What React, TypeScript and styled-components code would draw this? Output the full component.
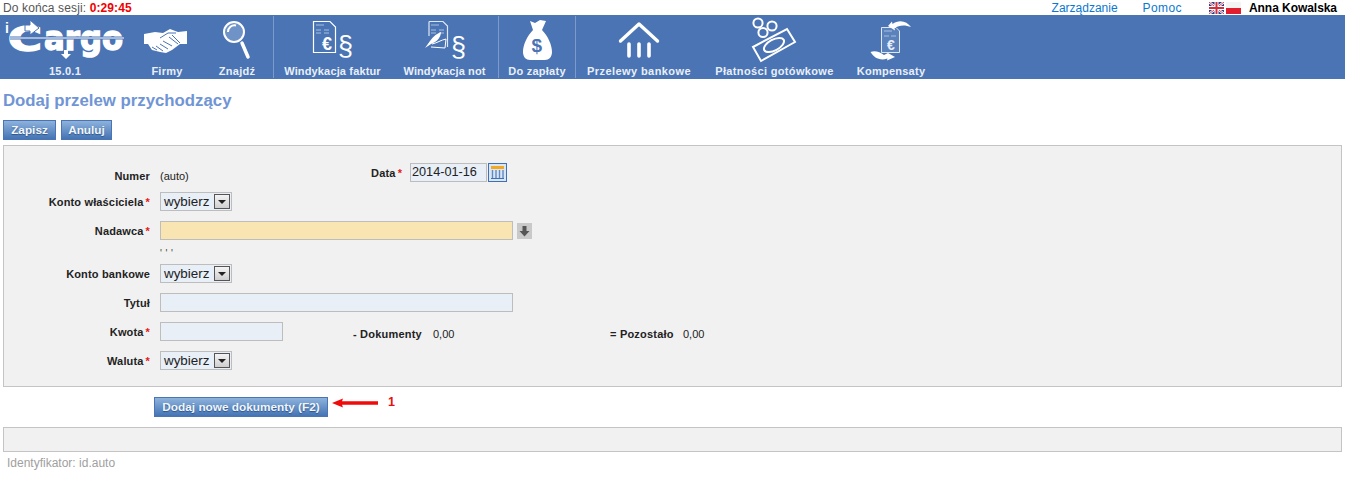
import React from 'react'
import styled, { createGlobalStyle } from 'styled-components'

const NAV_BLUE = '#4a74b4'

const GlobalStyle = createGlobalStyle`
  html, body {
    margin: 0;
    background: #fff;
    font-family: 'Liberation Sans', Arial, sans-serif;
  }
`
const TopBar = styled.div`
  display: flex;
  align-items: center;
  justify-content: space-between;
  height: 15px;
  padding: 0 8px 0 3px;
  font-size: 12px;
  color: #555;
`
const SessionTime = styled.b`
  color: #f00000;
  letter-spacing: 0.1px;
`
const SessionText = styled.span`
  letter-spacing: 0.12px;
`
const TopRight = styled.div`
  display: flex;
  align-items: center;
`
const TopLink = styled.a<{ $gap: number; $spacing?: number }>`
  color: #0b78cf;
  margin-right: ${p => p.$gap}px;
  letter-spacing: ${p => p.$spacing || 0}px;
`
const UserName = styled.b`
  color: #000;
  margin-left: 8px;
  letter-spacing: -0.05px;
`
const Nav = styled.nav`
  display: flex;
  height: 64px;
  background: ${NAV_BLUE};
`
const NavItem = styled.div<{ $width: number }>`
  display: flex;
  flex-direction: column;
  align-items: center;
  width: ${p => p.$width}px;
`
const NavSvg = styled.svg`
  display: block;
  flex: none;
`
const NavLabel = styled.span<{ $spacing?: number }>`
  font-size: 11px;
  font-weight: 700;
  line-height: 13px;
  letter-spacing: ${p => p.$spacing ?? 0.25}px;
  white-space: nowrap;
  color: #e9eff8;
`
const NavSep = styled.div<{ $before?: number }>`
  width: 1px;
  height: 62px;
  margin: 1px 0 0 ${p => p.$before || 0}px;
  background: #7c9bca;
`
const Title = styled.h1`
  margin: 13px 0 0 3px;
  font-size: 16.8px;
  line-height: 18px;
  font-weight: 700;
  color: #7095d5;
`
const Toolbar = styled.div`
  display: flex;
  gap: 5px;
  margin: 10px 0 5px 3px;
`
const BlueButton = styled.button<{ $width: number }>`
  width: ${p => p.$width}px;
  height: 20px;
  padding: 0;
  border: 1px solid #4a74b4;
  background: linear-gradient(#8db2dc, #4474b4);
  color: #f2f6fb;
  font-family: inherit;
  font-size: 11.8px;
  font-weight: 700;
  text-shadow: 0 1px 1px #2e5488;
`
const Panel = styled.div`
  margin: 0 3px 0 3px;
  border: 1px solid #c4c4c4;
  background: #f1f1f1;
`
const FormPanel = styled(Panel)`
  display: flex;
  flex-direction: column;
  gap: 10px;
  padding: 17px 0 16px;
`
const Row = styled.div`
  display: flex;
  align-items: center;
  height: 19px;
`
const HintRow = styled.div`
  height: 4px;
  margin-left: 156px;
  font-size: 10px;
  line-height: 8px;
  letter-spacing: 3.6px;
  color: #3d4a2a;
`
const Label = styled.label<{ $drop?: number }>`
  width: 146px;
  margin-right: 10px;
  flex: none;
  text-align: right;
  font-size: 11px;
  font-weight: 700;
  letter-spacing: 0.15px;
  color: #222;
  padding-top: ${p => p.$drop || 0}px;
`
const Star = styled.span`
  color: #e81818;
  margin-left: 2px;
`
const Plain = styled.span<{ $width: number }>`
  flex: none;
  width: ${p => p.$width}px;
  font-size: 11px;
  color: #222;
  padding-top: 6px;
`
const InlineLabel = styled.label<{ $width: number }>`
  flex: none;
  width: ${p => p.$width}px;
  font-size: 11px;
  font-weight: 700;
  letter-spacing: 0.2px;
  color: #222;
`
const TextBox = styled.div<{ $width: number; $tone?: 'warn' }>`
  box-sizing: border-box;
  flex: none;
  width: ${p => p.$width}px;
  height: 19px;
  padding-left: 1px;
  border: 1px solid #bdbdbd;
  background: ${p => (p.$tone === 'warn' ? '#f9e5b2' : '#e8eff7')};
  font-size: 12.7px;
  line-height: 17px;
  color: #222;
`
const SelectBox = styled.div`
  box-sizing: border-box;
  display: flex;
  align-items: center;
  justify-content: space-between;
  width: 72px;
  height: 19px;
  padding: 0 1px 0 3px;
  border: 1px solid #bdbdbd;
  background: #e8eff7;
  font-size: 13.4px;
  color: #222;
`
const SelectArrow = styled.span`
  box-sizing: border-box;
  display: flex;
  align-items: center;
  justify-content: center;
  width: 16px;
  height: 15px;
  border: 1px solid #555;
  background: linear-gradient(#f4f4f4, #cfcfcf);
  &::after {
    content: '';
    border: 4px solid transparent;
    border-top-color: #222;
    border-bottom: 0;
  }
`
const Summary = styled.div`
  display: flex;
  align-items: center;
  padding-top: 5px;
`
const SummaryValue = styled.span<{ $width?: number }>`
  flex: none;
  width: ${p => (p.$width ? `${p.$width}px` : 'auto')};
  font-size: 11px;
  color: #222;
`
const IconSlot = styled.span<{ $left: number; $lift?: number }>`
  display: flex;
  margin-left: ${p => p.$left}px;
  margin-bottom: ${p => p.$lift || 0}px;
`
const ActionRow = styled.div`
  display: flex;
  align-items: center;
  height: 20px;
  margin: 10px 0 10px 154px;
`
const Callout = styled.b`
  margin: 0 0 11px 10px;
  font-size: 12.5px;
  color: #ea0f0f;
`
const StatusPanel = styled(Panel)`
  height: 23px;
`
const Footer = styled.div`
  margin: 4px 0 0 7px;
  font-size: 12px;
  color: #a0a0a0;
`

const Logo = () => (
  <NavSvg width={130} height={50} viewBox="0 15 130 50">
    <text x={5} y={33} fill="#fff" fontFamily="'Liberation Sans'" fontWeight={700} fontSize={14}>
      i
    </text>
    <g fill="#fff" stroke="#fff" strokeWidth={1.4} fontFamily="'DejaVu Sans'" fontWeight={700}>
      <text x={8} y={51} fontSize={33} textLength={34} lengthAdjust="spacingAndGlyphs">
        C
      </text>
      <text x={44} y={50} fontSize={33} textLength={79} lengthAdjust="spacingAndGlyphs">
        argo
      </text>
    </g>
    <path d="M25 25 H30 V20 L39 28 L30 35 V31 H25 Z" fill="#fff" stroke={NAV_BLUE} strokeWidth={1} />
    <path d="M10 38 H124" stroke={NAV_BLUE} strokeWidth={3} />
    <path d="M10 38 H124" stroke="#fff" strokeWidth={1} />
    <path d="M64 50 V54 H61 L66 59 L71 54 H68 V50 Z" fill="#fff" />
  </NavSvg>
)

const Handshake = () => (
  <NavSvg width={74} height={50} viewBox="130 15 74 50">
    <path d="M144 34 L155 32 L163 33 L170 29 L178 32 L187 31 L187 44 L180 44 L172 50 L166 53 L160 52 L152 50 L148 44 L144 44 Z" fill="#fff" />
    <path
      d="M160 38 L168 33 L176 33 M163 41 L172 46 M160 44 L168 49 M156 46 L163 51 M152 47 L157 50 M169 37 L178 44 M172 35 L180 43"
      stroke={NAV_BLUE}
      strokeWidth={1}
      fill="none"
    />
  </NavSvg>
)

const Magnifier = () => (
  <NavSvg width={66} height={50} viewBox="204 15 66 50">
    <circle cx={234} cy={32} r={10} fill="#6f92c7" stroke="#fff" strokeWidth={2} />
    <path d="M228 32 A6.5 6.5 0 0 1 236 25.5" stroke="#fff" strokeWidth={2} fill="none" />
    <path d="M242 43 L248 57" stroke="#fff" strokeWidth={3.5} strokeLinecap="round" />
  </NavSvg>
)

const DocLines = ({ x, y }: { x: number; y: number }) => (
  <path
    d={`M${x} ${y} h8 M${x} ${y + 5} h5 M${x + 8} ${y + 5} h5 M${x} ${y + 8} h5 M${x + 8} ${y + 8} h5`}
    stroke="#a9bfdf"
    strokeWidth={1}
  />
)

const InvoiceDoc = () => (
  <NavSvg width={117} height={50} viewBox="274 15 117 50">
    <path d="M313.5 21.5 H330 L335.5 27 V52.5 H313.5 Z" fill="none" stroke="#fff" strokeWidth={1.2} />
    <DocLines x={316} y={25} />
    <text x={322} y={50} fill="#fff" fontFamily="'Liberation Sans'" fontWeight={700} fontSize={18}>
      €
    </text>
    <text x={338} y={55} fill="#fff" fontFamily="'Liberation Sans'" fontSize={27}>
      §
    </text>
  </NavSvg>
)

const NoteDoc = () => (
  <NavSvg width={107} height={50} viewBox="391 15 107 50">
    <path d="M429 21.5 H443 L447.5 26 V47 M429 21.5 V36" fill="none" stroke="#dfe7f3" strokeWidth={1.2} />
    <DocLines x={431} y={25} />
    <path d="M425 48 L430 41 C433 36 438 33 441 32 C441 37 437 42 431 44 Z" fill="#fff" />
    <path d="M432 44 C437 43 441 40 446 39 L445 48 L431 47" fill="none" stroke="#fff" strokeWidth={1} />
    <text x={451} y={56} fill="#fff" fontFamily="'Liberation Sans'" fontSize={27}>
      §
    </text>
  </NavSvg>
)

const MoneyBag = () => (
  <NavSvg width={76} height={50} viewBox="499 15 76 50">
    <path
      d="M530 21 L535 23 L540 20 L546 21 L542 30 C548 36 552 45 552 52 C552 57 549 60 545 60 L530 60 C526 60 523 57 523 52 C523 45 527 36 533 30 Z"
      fill="#fff"
    />
    <text x={531.5} y={52} fill={NAV_BLUE} fontFamily="'Liberation Sans'" fontWeight={700} fontSize={19}>
      $
    </text>
  </NavSvg>
)

const Bank = () => (
  <NavSvg width={126} height={50} viewBox="577 15 126 50">
    <path d="M621.5 41 L640 24 L658.5 41" fill="none" stroke="#fff" strokeWidth={3.4} strokeLinecap="round" strokeLinejoin="round" />
    <path d="M630 44 V56 M640 44 V56 M650 44 V56" stroke="#fff" strokeWidth={3.6} strokeLinecap="round" />
  </NavSvg>
)

const CashNotes = () => (
  <NavSvg width={145} height={50} viewBox="703 15 145 50">
    <g fill="none" stroke="#fff" strokeWidth={2}>
      <circle cx={759} cy={23} r={4.6} />
      <circle cx={773} cy={26} r={4.6} />
      <circle cx={764} cy={32.5} r={4.6} />
      <path d="M754 47 L788 29 L796 42 L762 61 Z" />
      <ellipse cx={775} cy={45} rx={11} ry={5.5} transform="rotate(-28 775 45)" />
    </g>
  </NavSvg>
)

const Offsets = () => (
  <NavSvg width={88} height={50} viewBox="848 15 88 50">
    <path d="M882.5 27.5 H897 L900.5 31 V52.5 H882.5 Z" fill="#5c82bc" stroke="#dfe7f3" strokeWidth={1} />
    <path d="M885 31 h8 M885 36 h5 M892 36 h5" stroke="#a9bfdf" strokeWidth={1} />
    <text x={888} y={50} fill="#e9eff8" fontFamily="'Liberation Sans'" fontWeight={700} fontSize={14}>
      €
    </text>
    <path d="M889 26 L893 21.5 L893.5 24 C900 19 908 21 912 27 C906 24.5 900 25 895.5 28 L896 30.5 Z" fill="#fff" />
    <path d="M871.5 52 C876 50 881 52 885 55 L889 53 L896 57 L888 60.5 L888.5 58.5 C881 61 875 58 871.5 52 Z" fill="#fff" />
  </NavSvg>
)

type NavEntry = { label: string; width: number; icon: React.ReactNode; spacing?: number }

const navLeft: NavEntry[] = [
  { label: '15.0.1', width: 130, icon: <Logo /> },
  { label: 'Firmy', width: 74, icon: <Handshake /> },
  { label: 'Znajdź', width: 66, icon: <Magnifier /> },
]
const navRight: NavEntry[] = [
  { label: 'Przelewy bankowe', width: 126, icon: <Bank />, spacing: 0.42 },
  { label: 'Płatności gotówkowe', width: 145, icon: <CashNotes />, spacing: 0.35 },
  { label: 'Kompensaty', width: 88, icon: <Offsets /> },
]
const renderItem = (item: NavEntry) => (
  <NavItem key={item.label} $width={item.width}>
    {item.icon}
    <NavLabel $spacing={item.spacing}>{item.label}</NavLabel>
  </NavItem>
)

const Flags = () => (
  <svg width={32} height={12} viewBox="0 0 32 12">
    <rect x={0} y={0} width={15} height={12} fill="#2d3f86" />
    <path d="M0 0 L15 12 M15 0 L0 12" stroke="#fff" strokeWidth={2.4} />
    <path d="M0 0 L15 12 M15 0 L0 12" stroke="#d03040" strokeWidth={0.9} />
    <path d="M7.5 0 V12 M0 6 H15" stroke="#fff" strokeWidth={4} />
    <path d="M7.5 0 V12 M0 6 H15" stroke="#d03040" strokeWidth={2} />
    <rect x={17} y={0} width={15} height={6} fill="#f4f4f4" />
    <rect x={17} y={6} width={15} height={6} fill="#e01e2e" />
  </svg>
)

const Calendar = () => (
  <IconSlot $left={1}>
    <svg width={19} height={19} viewBox="0 0 19 19">
      <rect x={0.5} y={0.5} width={18} height={18} fill="#dbe6f4" stroke="#3f6fb5" />
      <rect x={3} y={3} width={13} height={3} fill="#f4a81e" />
      <path d="M4.5 7 V15 M8 7 V15 M11.5 7 V15 M15 7 V15" stroke="#5f88c4" strokeWidth={1.4} />
      <path d="M3 15.5 H16" stroke="#3f6fb5" />
    </svg>
  </IconSlot>
)

const PickerArrow = () => (
  <IconSlot $left={4}>
    <svg width={15} height={16} viewBox="0 0 15 16">
      <rect width={15} height={16} fill="#c9c9c9" />
      <path d="M5.5 3 H9.5 V8 H12.5 L7.5 13.5 L2.5 8 H5.5 Z" fill="#555" />
    </svg>
  </IconSlot>
)

const RedArrow = () => (
  <IconSlot $left={4} $lift={8}>
    <svg width={46} height={10} viewBox="0 0 46 10">
      <path d="M0 5 L11 0.5 L10 3.2 L46 3.2 L46 6.8 L10 6.8 L11 9.5 Z" fill="#f00a0a" />
    </svg>
  </IconSlot>
)

const Select = () => (
  <SelectBox>
    wybierz
    <SelectArrow />
  </SelectBox>
)

const App = () => (
  <>
    <GlobalStyle />
    <TopBar>
      <SessionText>
        Do końca sesji: <SessionTime>0:29:45</SessionTime>
      </SessionText>
      <TopRight>
        <TopLink $gap={25}>Zarządzanie</TopLink>
        <TopLink $gap={27} $spacing={0.4}>
          Pomoc
        </TopLink>
        <Flags />
        <UserName>Anna Kowalska</UserName>
      </TopRight>
    </TopBar>
    <Nav>
      {navLeft.map(renderItem)}
      <NavSep $before={3} />
      <NavItem $width={117}>
        <InvoiceDoc />
        <NavLabel $spacing={0.15}>Windykacja faktur</NavLabel>
      </NavItem>
      <NavItem $width={107}>
        <NoteDoc />
        <NavLabel $spacing={0.1}>Windykacja not</NavLabel>
      </NavItem>
      <NavSep />
      <NavItem $width={76}>
        <MoneyBag />
        <NavLabel>Do zapłaty</NavLabel>
      </NavItem>
      <NavSep />
      {navRight.map(renderItem)}
    </Nav>
    <Title>Dodaj przelew przychodzący</Title>
    <Toolbar>
      <BlueButton $width={53}>Zapisz</BlueButton>
      <BlueButton $width={51}>Anuluj</BlueButton>
    </Toolbar>
    <FormPanel>
      <Row>
        <Label $drop={6}>Numer</Label>
        <Plain $width={211}>(auto)</Plain>
        <InlineLabel $width={39}>
          Data<Star>*</Star>
        </InlineLabel>
        <TextBox $width={77}>2014-01-16</TextBox>
        <Calendar />
      </Row>
      <Row>
        <Label>
          Konto właściciela<Star>*</Star>
        </Label>
        <Select />
      </Row>
      <Row>
        <Label>
          Nadawca<Star>*</Star>
        </Label>
        <TextBox $width={353} $tone="warn" />
        <PickerArrow />
      </Row>
      <HintRow>'''</HintRow>
      <Row>
        <Label>Konto bankowe</Label>
        <Select />
      </Row>
      <Row>
        <Label>Tytuł</Label>
        <TextBox $width={353} />
      </Row>
      <Row>
        <Label>
          Kwota<Star>*</Star>
        </Label>
        <TextBox $width={123} />
        <IconSlot $left={70} />
        <Summary>
          <InlineLabel $width={80}>- Dokumenty</InlineLabel>
          <SummaryValue $width={177}>0,00</SummaryValue>
          <InlineLabel $width={73}>= Pozostało</InlineLabel>
          <SummaryValue>0,00</SummaryValue>
        </Summary>
      </Row>
      <Row>
        <Label>
          Waluta<Star>*</Star>
        </Label>
        <Select />
      </Row>
    </FormPanel>
    <ActionRow>
      <BlueButton $width={174}>Dodaj nowe dokumenty (F2)</BlueButton>
      <RedArrow />
      <Callout>1</Callout>
    </ActionRow>
    <StatusPanel />
    <Footer>Identyfikator: id.auto</Footer>
  </>
)

export default App
